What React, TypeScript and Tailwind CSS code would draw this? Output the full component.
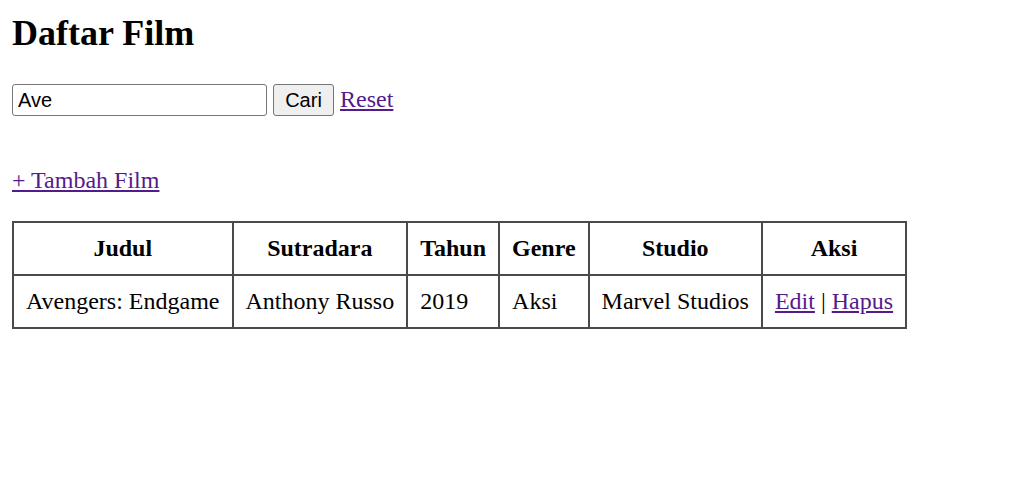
import React from 'react';

const films = [
  { judul: 'Avengers: Endgame', sutradara: 'Anthony Russo', tahun: 2019, genre: 'Aksi', studio: 'Marvel Studios' },
];

const linkCls = 'text-[#551a8b] underline';
const thCls = 'border-2 border-[#4a4a4a] px-[12px] py-[12px] font-bold text-center leading-[27px]';
const tdCls = 'border-2 border-[#4a4a4a] px-[12px] py-[12px] leading-[27px]';

const App = () => {
  return (
    <div className="min-h-screen bg-white px-[12px] pt-[13px] text-black text-[24px] font-['Liberation_Serif','Times_New_Roman',serif]">
      <h1 className="m-0 text-[36px] font-bold leading-[41px]">Daftar Film</h1>

      <form className="mt-[30px] flex items-center h-[32px]" onSubmit={e => e.preventDefault()}>
        <input
          type="text"
          defaultValue="Ave"
          className="w-[255px] h-[32px] border border-[#767676] rounded-[3px] bg-white px-[5px] text-[20px] font-['Liberation_Sans',Arial,sans-serif] text-black outline-none"
        />
        <button
          type="submit"
          className="ml-[6px] w-[61px] h-[32px] border border-[#767676] rounded-[3px] bg-[#efefef] text-[20px] font-['Liberation_Sans',Arial,sans-serif] text-black"
        >
          Cari
        </button>
        <a href="#" className={`ml-[6px] mb-[2px] leading-[27px] ${linkCls}`}>Reset</a>
      </form>

      <div className="mt-[51px] leading-[27px]">
        <a href="#" className={linkCls}>+ Tambah Film</a>
      </div>

      <table className="mt-[27px] border-collapse border-2 border-[#4a4a4a]">
        <thead>
          <tr>
            <th className={thCls}>Judul</th>
            <th className={thCls}>Sutradara</th>
            <th className={thCls}>Tahun</th>
            <th className={thCls}>Genre</th>
            <th className={thCls}>Studio</th>
            <th className={thCls}>Aksi</th>
          </tr>
        </thead>
        <tbody>
          {films.map(film => (
            <tr key={film.judul}>
              <td className={tdCls}>{film.judul}</td>
              <td className={tdCls}>{film.sutradara}</td>
              <td className={tdCls}>{film.tahun}</td>
              <td className={tdCls}>{film.genre}</td>
              <td className={tdCls}>{film.studio}</td>
              <td className={tdCls}>
                <a href="#" className={linkCls}>Edit</a> | <a href="#" className={linkCls}>Hapus</a>
              </td>
            </tr>
          ))}
        </tbody>
      </table>
    </div>
  );
};

export default App;
